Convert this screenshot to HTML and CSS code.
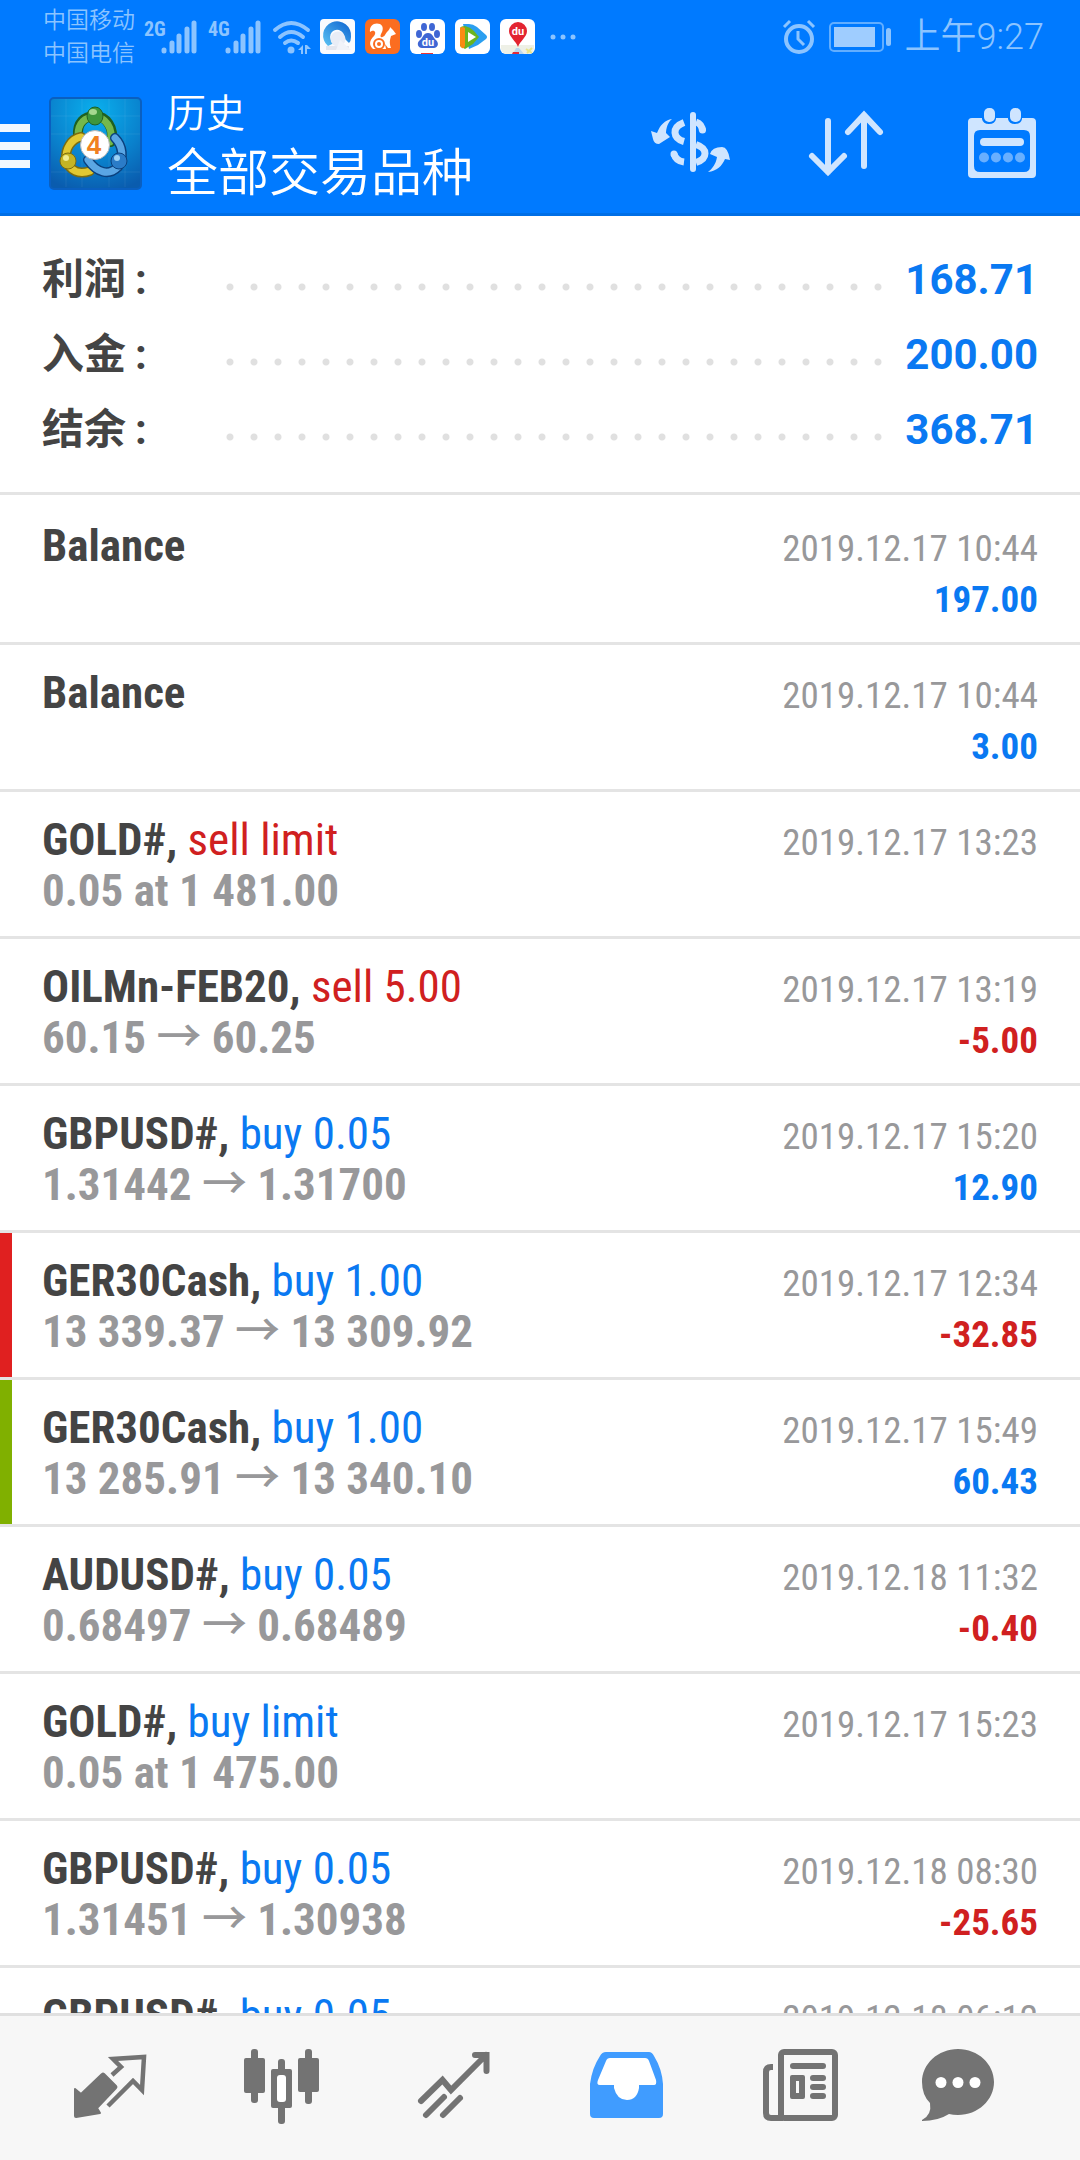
FILE: index.html
```html
<!DOCTYPE html>
<html lang="zh-CN">
<head>
<meta charset="utf-8">
<meta name="viewport" content="width=device-width, initial-scale=1">
<title>历史 - 全部交易品种</title>
<link rel="stylesheet" href="styles.css">
</head>
<body>
<header class="top">
  <div class="status">
    <div class="carriers"><span>中国移动</span><span>中国电信</span></div>
    <div class="signals">
      <svg width="54" height="36" viewBox="0 0 54 36"><text class="net" x="0" y="17">2G</text><g stroke="#8cc4ff" stroke-width="5" stroke-linecap="round"><path d="M20 31v1M28 24v8M35 17v15M43 10v22M50 4v28"/></g></svg>
      <svg width="54" height="36" viewBox="0 0 54 36"><text class="net" x="0" y="17">4G</text><g stroke="#8cc4ff" stroke-width="5" stroke-linecap="round"><path d="M20 31v1M28 24v8M35 17v15M43 10v22M50 4v28"/></g></svg>
      <svg width="40" height="36" viewBox="0 0 40 36"><g fill="none" stroke="#8cc4ff" stroke-width="4" stroke-linecap="round"><path d="M3 11Q19-3 36 11M8 18Q19 8 31 18M13 24Q19 19 26 24"/></g><circle cx="19" cy="31" r="3.500" fill="#8cc4ff"/><path d="M26 31l5-5v9h-2v-4zM33 26v9h2v-5l4 0-4-4z" fill="#8cc4ff"/></svg>
    </div>
    <div class="apps">
      <svg width="36" height="36" viewBox="0 0 36 36"><defs><linearGradient id="ring" x1="0" y1="1" x2="1" y2="0"><stop offset="0" stop-color="#5cc4f4"/><stop offset="1" stop-color="#0c62d0"/></linearGradient></defs><rect width="35" height="35" rx="4" fill="#fafbfe"/><path d="M6 27h23v4H6z" fill="#e4e6ee"/><path d="M8 27a14 14 0 1 1 23-9q0 4-2 6l-5-5a7 7 0 1 0-10 5z" fill="url(#ring)"/><circle cx="18" cy="20" r="7.500" fill="#e9edf6"/><path d="M20 21l11 10H16z" fill="#f1f3f9"/></svg>
      <svg width="36" height="36" viewBox="0 0 36 36"><rect width="35" height="35" rx="6" fill="#fb6d20"/><path d="M5 13C4 6 10 3 15 5c4 2 3 7 1 10-2 4 2 4 4 1 2-4 5-5 5-8l3 3 3 4-5 2c-1 4-2 6 0 12h-3l-3-4 1 5H8c-4-4-4-8 1-13 3-4 0-7-4-4z" fill="#fff"/><circle cx="14" cy="25" r="5" fill="#fff" stroke="#fb6d20" stroke-width="2"/><circle cx="14" cy="25" r="2" fill="#fb6d20"/></svg>
      <svg width="36" height="36" viewBox="0 0 36 36"><rect width="35" height="35" rx="6" fill="#fff"/><g fill="#3f66d4"><ellipse cx="9" cy="15" rx="3" ry="4"/><ellipse cx="14" cy="8" rx="3" ry="4"/><ellipse cx="22" cy="8" rx="3" ry="4"/><ellipse cx="27" cy="15" rx="3" ry="4"/><path d="M18 14c5 0 5 5 8 7 4 4 1 8-2 8H12c-4 0-6-5-2-8 3-2 3-7 8-7z"/></g><text class="du" x="18" y="27">du</text><path d="M11 34h12v1H11z" fill="#e33"/></svg>
      <svg width="36" height="36" viewBox="0 0 36 36"><rect width="35" height="35" rx="6" fill="#fff"/><path d="M8 5h6q4 0 8 3l9 8q2 2 0 4l-8 6-9 4z" fill="#2b9ff0"/><path d="M5 9q1-2 5-2 5 1 9 5l5 6-6 7-8 5-5-3z" fill="#6ab420"/><path d="M5 9q2-2 5 0v18q-1 3-3 2-2-1-2-4z" fill="#fb8a12"/><path d="M13 13l8 5-8 5z" fill="#fff"/></svg>
      <svg width="36" height="36" viewBox="0 0 36 36"><rect width="35" height="35" rx="6" fill="#fff"/><path d="M1 26h33v4q-1 4-4 5H6q-4-1-5-5z" fill="#eef0e6"/><path d="M13 35l3-6h3l5 6z" fill="#bcd8ee"/><path d="M26 30l6 4M32 29l-5 5" stroke="#e8e48a" stroke-width="2"/><path d="M18 28C16 22 9 18 9 12a9 9 0 0 1 18 0c0 6-7 10-9 16z" fill="#e32430"/><text class="du" x="18" y="16">du</text><path d="M13 33h6v2h-7z" fill="#e02c3c"/></svg>
      <svg width="36" height="36" viewBox="0 0 36 36"><g fill="#8cc4ff"><circle cx="8" cy="18" r="2.500"/><circle cx="18" cy="18" r="2.500"/><circle cx="28" cy="18" r="2.500"/></g></svg>
    </div>
    <div class="clock">
      <svg width="36" height="36" viewBox="0 0 36 36"><g fill="none" stroke="#8cc4ff" stroke-width="4"><circle cx="18" cy="20" r="13"/><path d="M17 12v8l6 6M3 8l6-6M27 2l6 6" stroke-width="3"/></g></svg>
      <svg width="64" height="36" viewBox="0 0 64 36"><rect x="1" y="4" width="53" height="28" rx="4" fill="none" stroke="#62aeff" stroke-width="2"/><rect x="5" y="8" width="41" height="20" fill="#9fcdff"/><rect x="57" y="9" width="5" height="18" rx="2.500" fill="#8cc4ff"/></svg>
      <time>上午9:27</time>
    </div>
  </div>
  <div class="bar">
    <button class="menu" aria-label="菜单"><svg width="30" height="96" viewBox="0 0 30 96"><path d="M0 34h30M0 52h30M0 70h30" stroke="#f2f8ff" stroke-width="8"/></svg></button>
    <svg class="logo" width="96" height="96" viewBox="0 0 96 96"><defs><radialGradient id="sky" cx=".5" cy=".15" r=".9"><stop offset="0" stop-color="#0ab0ee"/><stop offset=".6" stop-color="#0a80cc"/><stop offset="1" stop-color="#0a5cae"/></radialGradient></defs><rect x="1" y="4" width="91" height="91" rx="4" fill="url(#sky)" stroke="#0a5fc0" stroke-width="2"/><path d="M17 5v88M33 5v88M60 5v88M76 5v88M2 22h89M2 40h89M2 78h89" stroke="#fff" stroke-opacity=".07"/><g fill="none" stroke-linecap="round"><path d="M29 42c-1-13 6-20 17-20s20 12 16 26" stroke="#1f6020" stroke-width="10"/><path d="M29 41c0-12 7-18 17-18s19 11 15 25" stroke="#74b84c" stroke-width="7"/><path d="M32 43c-10 2-16 12-15 23 4 11 13 15 24 11" stroke="#7b6c10" stroke-width="10"/><path d="M32 43c-10 2-16 12-15 23 4 11 13 15 24 11" stroke="#e0c832" stroke-width="7"/><path d="M66 44c8 8 9 20 3 29-9 9-21 6-30-7" stroke="#0b417e" stroke-width="10"/><path d="M66 44c8 8 9 20 3 29-9 9-21 6-30-7" stroke="#5aa6e4" stroke-width="7"/></g><ellipse cx="46" cy="22" rx="8" ry="9" fill="#3e963c" stroke="#1f6020"/><ellipse cx="44" cy="18" rx="4" ry="3" fill="#a6d890"/><circle cx="19" cy="67" r="8" fill="#c4b424" stroke="#7b6c10"/><circle cx="17" cy="64" r="3" fill="#f0ec90"/><circle cx="70" cy="67" r="8" fill="#2b7cc8" stroke="#0b417e"/><circle cx="68" cy="64" r="3" fill="#9cd0f4"/><circle cx="46" cy="51" r="14.500" fill="#fff" stroke="#b8b8b8"/><text class="four" x="45" y="60">4</text></svg>
    <div class="titles"><h1>历史</h1><p>全部交易品种</p></div>
    <div class="actions">
      <button aria-label="货币"><svg width="96" height="96" viewBox="0 0 96 96"><g fill="none" stroke="#cfe5ff" stroke-width="7"><path d="M51 21v54" stroke-width="6" stroke-linecap="round"/><path d="M42 28.500c-13 5-11 16 0 19M32 60q2 7 10 8"/><path d="M32 60v.1M60.500 36v.1" stroke-linecap="round"/><path d="M54 28q6 2 6.500 9M54 50.500c12 4 12 14 0 18"/></g><path d="M30 25c-4 3-6 9-6 14l4 4-11 7q-5 0-6-5L9 37l6 2c3-8 8-13 15-14zM66 78c4-3 8-8 9-15l-7-3q2-7 12-7 6 0 8 13l-5-1c-3 7-8 12-17 13z" fill="#cfe5ff"/></svg></button>
      <button aria-label="排序"><svg width="96" height="96" viewBox="0 0 96 96"><path d="M30 27v51M14 62l16 16 16-16M66 72V21M50 38l16-17 16 17" fill="none" stroke="#cfe5ff" stroke-width="6" stroke-linecap="round"/></svg></button>
      <button aria-label="日期"><svg width="96" height="96" viewBox="0 0 96 96"><path fill="#cfe5ff" fill-rule="evenodd" d="M18 24h10v1q1 5 7 5t7-5v-1h12v1q1 5 7 5t7-5v-1h10q4 0 4 4v52q0 4-4 4H18q-4 0-4-4V28q0-4 4-4zM26 36q-6 0-6 6v30q0 6 6 6h44q6 0 6-6V42q0-6-6-6z"/><g fill="#cfe5ff"><rect x="30" y="14" width="11" height="14" rx="5"/><rect x="56" y="14" width="11" height="14" rx="5"/><rect x="26" y="44" width="44" height="8" rx="4"/><g opacity=".5"><circle cx="30" cy="63.500" r="5"/><circle cx="42" cy="63.500" r="5"/><circle cx="54" cy="63.500" r="5"/><circle cx="66" cy="63.500" r="5"/></g></g></svg></button>
    </div>
  </div>
</header>
<main class="content">
  <dl class="summary">
    <div><dt>利润<span class="colon">:</span></dt><dd>168.71</dd></div>
    <div><dt>入金<span class="colon">:</span></dt><dd>200.00</dd></div>
    <div><dt>结余<span class="colon">:</span></dt><dd>368.71</dd></div>
  </dl>
  <ul class="deals">
    <li><p class="name"><b>Balance</b></p><time>2019.12.17 10:44</time><p class="detail">&nbsp;</p><p class="amount">197.00</p></li>
    <li><p class="name"><b>Balance</b></p><time>2019.12.17 10:44</time><p class="detail">&nbsp;</p><p class="amount">3.00</p></li>
    <li><p class="name"><b>GOLD#,</b> <span class="sell">sell limit</span></p><time>2019.12.17 13:23</time><p class="detail">0.05 at 1 481.00</p></li>
    <li><p class="name"><b>OILMn-FEB20,</b> <span class="sell">sell 5.00</span></p><time>2019.12.17 13:19</time><p class="detail">60.15 <span class="arrow">→</span> 60.25</p><p class="amount loss">-5.00</p></li>
    <li><p class="name"><b>GBPUSD#,</b> <span class="buy">buy 0.05</span></p><time>2019.12.17 15:20</time><p class="detail">1.31442 <span class="arrow">→</span> 1.31700</p><p class="amount">12.90</p></li>
    <li class="stop-loss"><p class="name"><b>GER30Cash,</b> <span class="buy">buy 1.00</span></p><time>2019.12.17 12:34</time><p class="detail">13 339.37 <span class="arrow">→</span> 13 309.92</p><p class="amount loss">-32.85</p></li>
    <li class="take-profit"><p class="name"><b>GER30Cash,</b> <span class="buy">buy 1.00</span></p><time>2019.12.17 15:49</time><p class="detail">13 285.91 <span class="arrow">→</span> 13 340.10</p><p class="amount">60.43</p></li>
    <li><p class="name"><b>AUDUSD#,</b> <span class="buy">buy 0.05</span></p><time>2019.12.18 11:32</time><p class="detail">0.68497 <span class="arrow">→</span> 0.68489</p><p class="amount loss">-0.40</p></li>
    <li><p class="name"><b>GOLD#,</b> <span class="buy">buy limit</span></p><time>2019.12.17 15:23</time><p class="detail">0.05 at 1 475.00</p></li>
    <li><p class="name"><b>GBPUSD#,</b> <span class="buy">buy 0.05</span></p><time>2019.12.18 08:30</time><p class="detail">1.31451 <span class="arrow">→</span> 1.30938</p><p class="amount loss">-25.65</p></li>
    <li><p class="name"><b>GBPUSD#,</b> <span class="buy">buy 0.05</span></p><time>2019.12.18 06:12</time></li>
  </ul>
</main>
<nav class="tabs">
  <a href="#quotes" aria-label="行情"><svg width="96" height="96" viewBox="0 0 96 96"><path d="M13 49l6 5 21-20q1-1 2 0l12 12q1 1 0 2L35 68l3 5-24 4q-1 0-1-1z" fill="#737373" stroke="#737373" stroke-width="2" stroke-linejoin="round"/><path d="M50 35l9-8-8-8 31-2-2 33-9-9-25 25" fill="none" stroke="#737373" stroke-width="4.500"/></svg></a>
  <a href="#charts" aria-label="图表"><svg width="96" height="96" viewBox="0 0 96 96"><g fill="#737373"><rect x="10" y="18" width="21" height="35" rx="2"/><rect x="17" y="9" width="7" height="54" rx="3"/><rect x="64" y="18" width="21" height="34" rx="2"/><rect x="71" y="9" width="7" height="55" rx="3"/><rect x="44" y="19" width="7" height="65" rx="3"/><rect x="37" y="29" width="21" height="39" rx="2"/></g><rect x="43" y="35" width="9" height="27" rx="3" fill="#fff"/></svg></a>
  <a href="#trade" aria-label="交易"><svg width="96" height="96" viewBox="0 0 96 96"><path d="M15 61l21.500-21L45 50l35-35M69 15h11.500v16M20 75l18-18M37 75l17-17" fill="none" stroke="#737373" stroke-width="6" stroke-linecap="round"/></svg></a>
  <a href="#history" aria-label="历史" aria-current="page"><svg width="96" height="96" viewBox="0 0 96 96"><path fill="#409cff" d="M28 12h43q3 0 5 4 8 13 9 28v30q0 4-4 4H16q-4 0-4-4V44q2-16 10-28 2-4 6-4z"/><path fill="#fff" d="M32 18h35q3 0 4 3l7 19q1 5-2 5H61v3q-2 12-12 12t-13-12v-3H22q-4 0-2-5l8-19q1-3 4-3z"/></svg></a>
  <a href="#news" aria-label="新闻"><svg width="96" height="96" viewBox="0 0 96 96"><g fill="none" stroke="#737373" stroke-width="6"><rect x="31" y="12" width="54" height="66" rx="3"/><path d="M23 27h-2q-5 0-5 5v41q0 5 5 5h12"/></g><g fill="#737373"><rect x="40" y="23" width="36" height="6" rx="3"/><path fill-rule="evenodd" d="M42 35h11q2 0 2 2v20q0 2-2 2H42q-2 0-2-2V37q0-2 2-2zM46 41v12h3V41z"/><rect x="60" y="35" width="16" height="6" rx="3"/><rect x="60" y="44" width="16" height="6" rx="3"/><rect x="60" y="53" width="16" height="6" rx="3"/></g></svg></a>
  <a href="#messages" aria-label="消息"><svg width="96" height="96" viewBox="0 0 96 96"><path fill="#737373" d="M36 9c20 0 36 15 36 33S56 75 36 75q-5 0-9-1-11 7-27 7v-1q10-5 8-17Q0 55 0 42C0 24 16 9 36 9z"/><g fill="#fff"><circle cx="19" cy="42.500" r="5.500"/><circle cx="36" cy="42.500" r="5.500"/><circle cx="53" cy="42.500" r="5.500"/></g></svg></a>
</nav>
</body>
</html>
```

FILE: styles.css
```css
* { box-sizing: border-box; }
body, h1, p, ul, dl, dd { margin: 0; padding: 0; }
body {
  height: 100vh;
  display: flex;
  flex-direction: column;
  background: #fff;
  font-family: "Roboto Condensed", "Liberation Sans Narrow", "Noto Sans CJK SC", sans-serif;
}
svg { display: block; flex: none; overflow: visible; }
button { border: 0; padding: 0; background: none; }

.top {
  flex: none;
  background: #007aff;
  border-bottom: 3px solid #006fe6;
  font-family: Roboto, "Noto Sans CJK SC", sans-serif;
  font-weight: 350;
}
.status {
  display: flex;
  align-items: center;
  height: 71px;
  padding: 2px 36px 0 43px;
  color: #8cc4ff;
}
.carriers { display: flex; flex-direction: column; font-size: 23px; line-height: 33px; }
.signals { display: flex; gap: 10px; padding-left: 9px; }
.net { fill: #8cc4ff; font: bold 20px "Roboto Condensed", "Liberation Sans Narrow", sans-serif; }
.apps { display: flex; gap: 9px; padding-left: 8px; }
.du { fill: #fff; font: bold 11px Roboto, sans-serif; text-anchor: middle; }
.clock { display: flex; align-items: center; gap: 12px; margin-left: auto; font-size: 36px; line-height: 48px; }

.bar { display: flex; align-items: center; height: 142px; padding-right: 30px; }
.logo { margin-left: 19px; }
.four { fill: #f08020; font: bold 26px "Liberation Sans", sans-serif; text-anchor: middle; }
.titles { padding-top: 4px; margin-left: 22px; color: #fff; line-height: 60px; }
.titles h1 { font-size: 39px; font-weight: 350; }
.titles p { font-size: 51px; }
.actions { display: flex; gap: 60px; margin-left: auto; }

.content { flex: 1; min-height: 0; overflow: hidden; }
.summary {
  padding: 26px 42px 25px;
  border-bottom: 3px solid #e4e4e4;
  font: bold 42px/75px Roboto, "Noto Sans CJK SC", sans-serif;
}
.summary div { display: grid; grid-template-columns: 176px 1fr; height: 75px; color: #444; }
.summary dd { display: grid; grid-template-columns: 1fr 148px; text-align: right; color: #0a79f2; }
.summary dd::before {
  content: "";
  background: radial-gradient(circle at 12px 45px, #e0e0e0 3px, transparent 4px) 0 0 / 24px 75px repeat-x;
}
.colon { margin-left: 9px; }

.deals { list-style: none; padding-top: 3px; }
.deals li {
  display: grid;
  grid-template-columns: 1fr auto;
  grid-template-rows: 51px 51px;
  align-items: baseline;
  height: 147px;
  padding: 22px 42px 0;
  border-bottom: 3px solid #e4e4e4;
  line-height: 51px;
}
.name { font-size: 45px; color: #444; }
.sell { color: #d02020; }
.buy { color: #0a79f2; }
.deals time { font-size: 37px; color: #98989a; text-align: right; }
.detail { font-size: 45px; font-weight: bold; color: #98989a; }
.amount { grid-column: 2; font-size: 37px; font-weight: bold; color: #0a79f2; text-align: right; }
.loss { color: #d02020; }
.arrow { font-family: "Noto Sans CJK SC", sans-serif; font-weight: 500; line-height: 0; }
.stop-loss { background: linear-gradient(#e02020, #e02020) 0 0 / 12px 100% no-repeat; }
.take-profit { background: linear-gradient(#80b000, #80b000) 0 0 / 12px 100% no-repeat; }

.tabs {
  flex: none;
  display: flex;
  padding: 24px;
  background: #f7f7f7;
  border-top: 3px solid #e0e0e0;
}
.tabs a { flex: 1; display: flex; justify-content: center; }
```
